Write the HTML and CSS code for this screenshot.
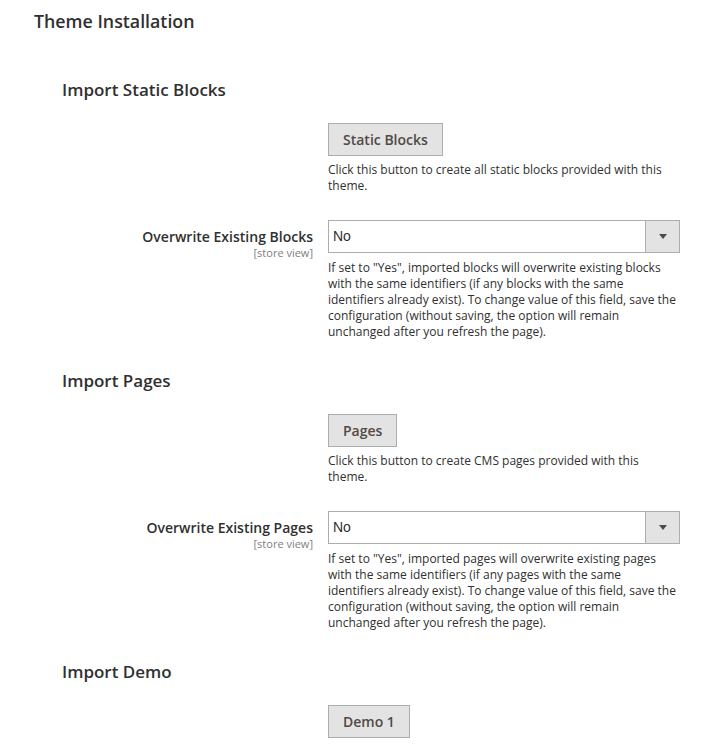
FILE: index.html
```html
<!DOCTYPE html>
<html lang="en">
<head>
<meta charset="utf-8">
<title>Theme Installation</title>
<link rel="stylesheet" href="styles.css">
</head>
<body>
<div class="page">
  <h2 class="section-title">Theme Installation</h2>

  <section class="group">
    <h3 class="group-title">Import Static Blocks</h3>
    <div class="row">
      <div class="label"></div>
      <div class="value">
        <button class="action-btn" type="button">Static Blocks</button>
        <p class="note">Click this button to create all static blocks provided with this theme.</p>
      </div>
    </div>
    <div class="row">
      <div class="label">
        <span class="label-text">Overwrite Existing Blocks</span>
        <span class="scope">[store view]</span>
      </div>
      <div class="value">
        <div class="select">
          <span class="select-value">No</span>
          <span class="select-arrow"><span class="triangle"></span></span>
        </div>
        <p class="note">If set to "Yes", imported blocks will overwrite existing blocks with the same identifiers (if any blocks with the same identifiers already exist). To change value of this field, save the configuration (without saving, the option will remain unchanged after you refresh the page).</p>
      </div>
    </div>
  </section>

  <section class="group">
    <h3 class="group-title">Import Pages</h3>
    <div class="row">
      <div class="label"></div>
      <div class="value">
        <button class="action-btn" type="button">Pages</button>
        <p class="note">Click this button to create CMS pages provided with this theme.</p>
      </div>
    </div>
    <div class="row">
      <div class="label">
        <span class="label-text">Overwrite Existing Pages</span>
        <span class="scope">[store view]</span>
      </div>
      <div class="value">
        <div class="select">
          <span class="select-value">No</span>
          <span class="select-arrow"><span class="triangle"></span></span>
        </div>
        <p class="note">If set to "Yes", imported pages will overwrite existing pages with the same identifiers (if any pages with the same identifiers already exist). To change value of this field, save the configuration (without saving, the option will remain unchanged after you refresh the page).</p>
      </div>
    </div>
  </section>

  <section class="group">
    <h3 class="group-title">Import Demo</h3>
    <div class="row">
      <div class="label"></div>
      <div class="value">
        <button class="action-btn" type="button">Demo 1</button>
      </div>
    </div>
  </section>
</div>
</body>
</html>
```

FILE: styles.css
```css
* {
  box-sizing: border-box;
}

html, body {
  margin: 0;
  padding: 0;
  background: #ffffff;
}

body {
  font-family: "Open Sans", "Liberation Sans", sans-serif;
  color: #303030;
  width: 726px;
  height: 752px;
  overflow: hidden;
}

.page {
  padding-top: 10px;
}

.section-title {
  margin: 0 0 45px 34px;
  font-size: 17.8px;
  line-height: 23px;
  font-weight: 600;
  color: #303030;
}

.group {
  padding-bottom: 29px;
}

.group-title {
  margin: 0 0 22px 62px;
  font-size: 17px;
  line-height: 23px;
  font-weight: 600;
  color: #303030;
}

.row {
  display: grid;
  grid-template-columns: 313px 352px;
  column-gap: 15px;
}

.row + .row {
  margin-top: 26px;
}

.label {
  display: flex;
  flex-direction: column;
  align-items: flex-end;
  padding-top: 7px;
  text-align: right;
}

.label-text {
  font-size: 14px;
  line-height: 19px;
  font-weight: 600;
  color: #303030;
}

.scope {
  margin-top: 1px;
  font-size: 11px;
  line-height: 12px;
  color: #808080;
}

.value {
  display: flex;
  flex-direction: column;
  align-items: flex-start;
}

.action-btn {
  height: 33px;
  padding: 6px 14px;
  border: 1px solid #adadad;
  background: #e3e3e3;
  color: #514943;
  font-family: "Open Sans", "Liberation Sans", sans-serif;
  font-size: 14px;
  line-height: 19px;
  font-weight: 600;
  border-radius: 0;
}

.note {
  margin: 6px 0 0;
  font-size: 12px;
  line-height: 16px;
  color: #303030;
}

.select + .note {
  margin-top: 7px;
}

.select {
  display: flex;
  width: 352px;
  height: 33px;
  border: 1px solid #adadad;
  background: #ffffff;
}

.select-value {
  flex: 1;
  padding-left: 4px;
  font-family: "Liberation Sans", Arial, sans-serif;
  font-size: 14px;
  line-height: 31px;
  color: #303030;
}

.select-arrow {
  width: 34px;
  border-left: 1px solid #adadad;
  background: #e3e3e3;
  display: flex;
  align-items: center;
  justify-content: center;
}

.triangle {
  width: 0;
  height: 0;
  border-left: 4px solid transparent;
  border-right: 4px solid transparent;
  border-top: 5px solid #514943;
}
```
